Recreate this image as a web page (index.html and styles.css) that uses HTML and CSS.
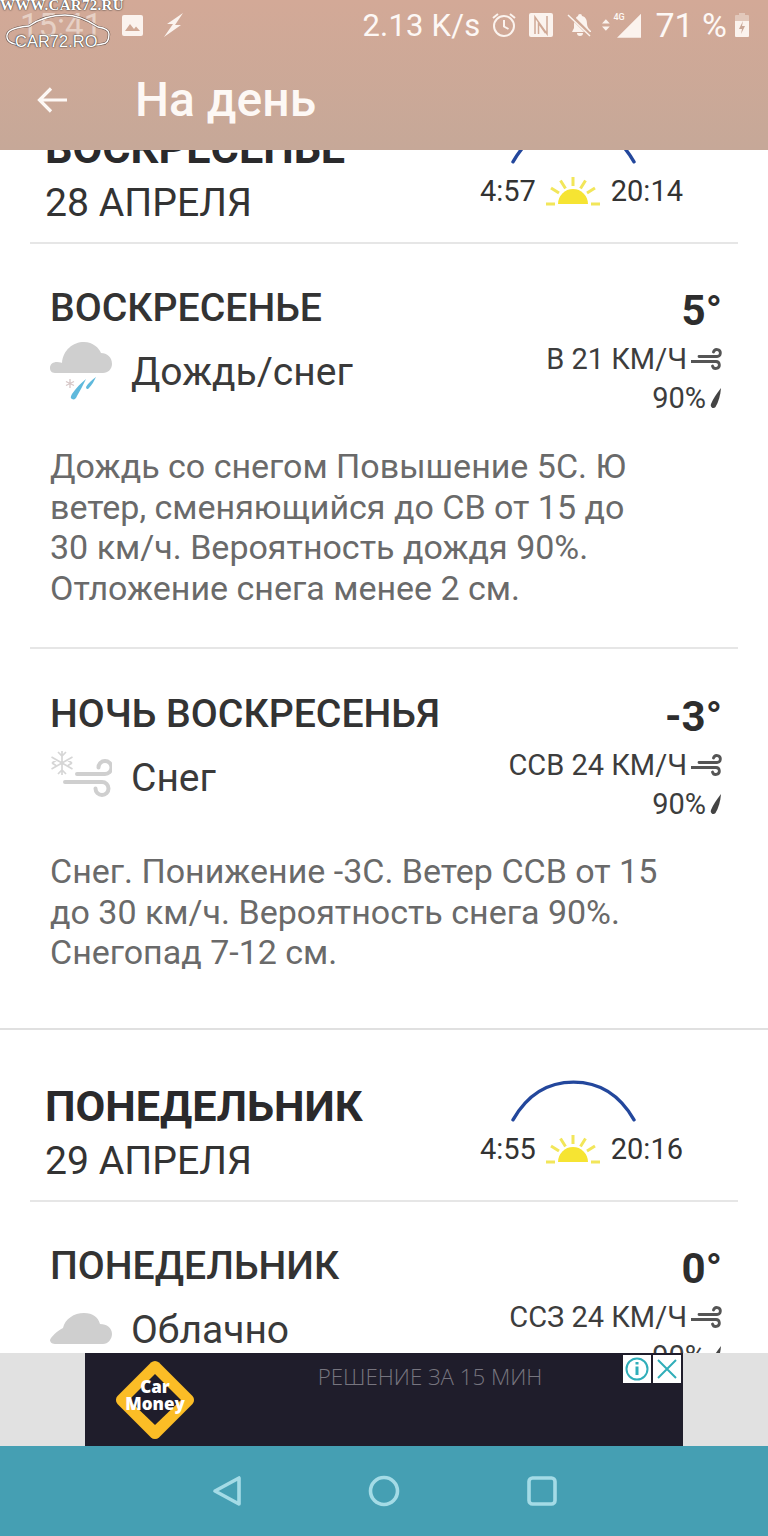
FILE: index.html
```html
<!DOCTYPE html>
<html lang="ru">
<head>
<meta charset="utf-8">
<title>На день</title>
<link rel="stylesheet" href="styles.css">
</head>
<body>
<svg class="defs" width="0" height="0" aria-hidden="true">
  <symbol id="wind" viewBox="0 0 31 23">
    <path d="M8 8.5H26a3.5 3.500 0 1 0-3.500-4.500M0 13.500H25a3.500 3.500 0 1 1-3.500 4.500" fill="none" stroke="currentColor" stroke-width="2.800" stroke-linecap="round"/>
  </symbol>
  <symbol id="drop" viewBox="0 0 12 22">
    <path d="M11 1C10.500 8 8.500 15 5.500 20 3.500 22.500 0 20.500 1 17 3 12 7 6 11 1Z" fill="currentColor"/>
  </symbol>
  <symbol id="sun" viewBox="0 0 54 30">
    <path d="M12 28a15 15 0 0 1 30 0Z" fill="#f6e432"/>
    <path d="M27 1v9M14.500 4.500l5 8M39.500 4.500l-5 8M5 12l8 5M49 12l-8 5M0 28h9M45 28h9" stroke="#f2e65a" stroke-width="3" fill="none"/>
  </symbol>
  <symbol id="arc" viewBox="0 0 126 42">
    <path d="M2 40C18 12 40 2 63 2s45 10 61 38" fill="none" stroke="#23479c" stroke-width="3.400" stroke-linecap="round"/>
  </symbol>
</svg>

<div class="phone">
  <header class="appbar">
    <div class="status">
      <div class="status-left">
        <span class="clock">15:41</span>
        <svg class="st-pic" viewBox="0 0 21 21"><path fill="#fbf3ee" d="M2 0h17a2 2 0 0 1 2 2v17a2 2 0 0 1-2 2H2a2 2 0 0 1-2-2V2a2 2 0 0 1 2-2Z"/><path fill="#d0a996" d="M3 16l5-7 4 5 2-2.500 4 4.500Z"/></svg>
        <svg class="st-bolt" viewBox="0 0 20 24"><path fill="#fbf3ee" d="M19 0 3 11h6L0 24 17 12h-6Z"/></svg>
      </div>
      <div class="status-right">
        <span class="speed">2.13 K/s</span>
        <svg class="st-alarm" viewBox="0 0 24 26"><g fill="none" stroke="#fbf3ee" stroke-width="2"><circle cx="12" cy="14" r="10"/><path d="M12 8v6.500l4.500 2.500M1 6l5-4M23 6l-5-4"/></g></svg>
        <svg class="st-nfc" viewBox="0 0 24 24"><rect width="24" height="24" rx="2" fill="#fbf3ee"/><path d="M6 21V4l12 17V3M9.500 21V10l7 10" fill="none" stroke="#d0a996" stroke-width="1.500"/></svg>
        <svg class="st-bell" viewBox="0 0 26 24"><path fill="#fbf3ee" d="M13 1a2 2 0 0 1 2 2c4 1 5 4 5 8 0 3 2 5 4 7v1H5L7 15v-4c0-4 2-7 4-8a2 2 0 0 1 2-2ZM10 20h6a3 3 0 0 1-6 0Z"/><path d="M2 1l22 22" stroke="#d0a996" stroke-width="4"/><path d="M1 2l22 21" stroke="#fbf3ee" stroke-width="1.500"/></svg>
        <span class="st-signal">
          <svg class="st-updown" viewBox="0 0 8 12"><path fill="#fbf3ee" d="M4 0l4 4.500H0ZM4 12 0 7.500h8Z"/></svg>
          <svg class="st-bars" viewBox="0 0 25 25"><path fill="#fbf3ee" d="M25 0v25H0Z"/></svg>
          <span class="st-4g">4G</span>
        </span>
        <span class="battery-pct">71 %</span>
        <svg class="st-batt" viewBox="0 0 14 24"><path fill="#e2c8bb" d="M4 0h6v2h3a1 1 0 0 1 1 1v5H0V3a1 1 0 0 1 1-1h3Z"/><path fill="#fbf3ee" d="M0 8h14v15a1 1 0 0 1-1 1H1a1 1 0 0 1-1-1Z"/><path fill="#c9a797" d="M8 8 4 16h3l-1 5 4-8H7Z"/></svg>
      </div>
    </div>
    <div class="toolbar">
      <svg class="back" viewBox="0 0 32 28"><path d="M30 14H3M14 2.500 2.500 14 14 25.500" fill="none" stroke="#fdf8f5" stroke-width="3.200"/></svg>
      <h1 class="page-title">На день</h1>
    </div>
    <div class="watermark">
      <span class="wm-url">WWW.CAR72.RU</span>
      <svg class="wm-car" viewBox="0 0 106 36"><path d="M16 32C6 31 1 28 2 22c1-5 10-8 22-9C34 6 48 2 60 2c12 0 24 6 33 12 7 1 11 3 11 7 0 6-2 10-7 10-3 1-5 1-8 1" fill="none" stroke="#6b5750" stroke-width="2.600"/><path d="M16 32C6 31 1 28 2 22c1-5 10-8 22-9C34 6 48 2 60 2c12 0 24 6 33 12 7 1 11 3 11 7 0 6-2 10-7 10-3 1-5 1-8 1" fill="none" stroke="#fff" stroke-width="1.400"/></svg>
      <span class="wm-name">CAR72.RO</span>
    </div>
  </header>

  <main class="scroller">
    <section class="day day-first">
      <div class="day-head">
        <div class="day-names">
          <div class="day-name">ВОСКРЕСЕНЬЕ</div>
          <div class="day-date">28 АПРЕЛЯ</div>
        </div>
        <div class="sun-block">
          <svg class="sun-arc"><use href="#arc"/></svg>
          <div class="sun-times"><span>4:57</span><svg class="sun-icon"><use href="#sun"/></svg><span>20:14</span></div>
        </div>
      </div>

      <article class="period period-first">
        <div class="period-top">
          <div class="period-left">
            <h2 class="period-name">ВОСКРЕСЕНЬЕ</h2>
            <div class="cond">
              <svg class="cond-icon" viewBox="0 0 62 62">
                <path fill="#cfcfcf" d="M5 34C1 34 0 31 0 29c0-4 3-6 7-6 3 0 5 1 5 1 1-13 11-21 22-21 9 0 15 6 17 11 6 0 11 4 11 11 0 5-4 9-9 9Z"/>
                <path fill="#5fb9dc" d="M36 40C33 46 30 52 27 57c-1 3-3 4-5 3-2-1-1-3 0-5 4-6 9-11 14-15Z"/>
                <path fill="#5fb9dc" d="M46 38c-2 4-4 8-7 11-1 2-3 1-3-1 2-4 6-7 10-10Z"/>
                <path d="M20 40v9M16 42.500l8 4M24 42.500l-8 4" stroke="#d6c6c6" stroke-width="1.300" fill="none"/>
              </svg>
              <span class="cond-text">Дождь/снег</span>
            </div>
          </div>
          <div class="period-right">
            <div class="temp">5°</div>
            <div class="meta meta-wind"><span>В 21 КМ/Ч</span><svg class="wind-icon"><use href="#wind"/></svg></div>
            <div class="meta meta-rain"><span>90%</span><svg class="drop-icon"><use href="#drop"/></svg></div>
          </div>
        </div>
        <p class="desc">Дождь со снегом Повышение 5С. Ю ветер, сменяющийся до СВ от 15 до 30 км/ч. Вероятность дождя 90%. Отложение снега менее 2 см.</p>
      </article>

      <article class="period period-night">
        <div class="period-top">
          <div class="period-left">
            <h2 class="period-name">НОЧЬ ВОСКРЕСЕНЬЯ</h2>
            <div class="cond">
              <svg class="cond-icon" viewBox="0 0 62 62">
                <path d="M12 6v24M1.500 12l21 12M22.500 12l-21 12M8 7l4 4 4-4M8 29l4-4 4 4M2 18l4-2.500M2 18l4 2.500M22 18l-4-2.500M22 18l-4 2.500" stroke="#d6d6d6" stroke-width="1.700" fill="none"/>
                <path d="M27 29H55a6.500 6.500 0 1 0-6.500-6.500M15 37H52a6.500 6.500 0 1 1-6.500 6.500" fill="none" stroke="#cfcfcf" stroke-width="4" stroke-linecap="round"/>
              </svg>
              <span class="cond-text">Снег</span>
            </div>
          </div>
          <div class="period-right">
            <div class="temp">-3°</div>
            <div class="meta meta-wind"><span>ССВ 24 КМ/Ч</span><svg class="wind-icon"><use href="#wind"/></svg></div>
            <div class="meta meta-rain"><span>90%</span><svg class="drop-icon"><use href="#drop"/></svg></div>
          </div>
        </div>
        <p class="desc">Снег. Понижение -3С. Ветер ССВ от 15 до 30 км/ч. Вероятность снега 90%. Снегопад 7-12 см.</p>
      </article>
    </section>

    <section class="day">
      <div class="day-head">
        <div class="day-names">
          <div class="day-name">ПОНЕДЕЛЬНИК</div>
          <div class="day-date">29 АПРЕЛЯ</div>
        </div>
        <div class="sun-block">
          <svg class="sun-arc"><use href="#arc"/></svg>
          <div class="sun-times"><span>4:55</span><svg class="sun-icon"><use href="#sun"/></svg><span>20:16</span></div>
        </div>
      </div>

      <article class="period period-first">
        <div class="period-top">
          <div class="period-left">
            <h2 class="period-name">ПОНЕДЕЛЬНИК</h2>
            <div class="cond">
              <svg class="cond-icon" viewBox="0 0 62 62">
                <path fill="#cfcfcf" d="M5 47C1 47 0 44 0 43c1-3 7-9 13-12C15 22 24 16 34 16c9 0 14 4 16 11 7 0 12 4 12 10 0 5-4 10-9 10Z"/>
              </svg>
              <span class="cond-text">Облачно</span>
            </div>
          </div>
          <div class="period-right">
            <div class="temp">0°</div>
            <div class="meta meta-wind"><span>ССЗ 24 КМ/Ч</span><svg class="wind-icon"><use href="#wind"/></svg></div>
            <div class="meta meta-rain"><span>90%</span><svg class="drop-icon"><use href="#drop"/></svg></div>
          </div>
        </div>
      </article>
    </section>
  </main>

  <aside class="ad">
    <div class="ad-inner">
      <svg class="ad-logo" viewBox="0 0 80 80">
        <path fill="#fbbd26" d="M36 2.500a6 6 0 0 1 8 0L77.500 36a6 6 0 0 1 0 8L44 77.500a6 6 0 0 1-8 0L2.500 44a6 6 0 0 1 0-8Z"/>
        <path fill="#1f1d2b" d="M40 14 66 40 40 65 14 40Z"/>
        <text class="ad-logo-text" x="40" y="33" text-anchor="middle">Car</text>
        <text class="ad-logo-text" x="40" y="50" text-anchor="middle">Money</text>
      </svg>
      <span class="ad-text">РЕШЕНИЕ ЗА 15 МИН</span>
      <div class="ad-badges">
        <span class="ad-badge"><svg viewBox="0 0 28 28"><circle cx="14" cy="14" r="10.500" fill="none" stroke="#30aeb9" stroke-width="2"/><path d="M14 11.500v8.500M14 7v2.500" stroke="#30aeb9" stroke-width="3" fill="none"/></svg></span>
        <span class="ad-badge"><svg viewBox="0 0 28 28"><path d="M5 5l18 18M23 5 5 23" stroke="#30aeb9" stroke-width="2" fill="none"/></svg></span>
      </div>
    </div>
  </aside>

  <nav class="navbar">
    <svg class="nav-back" viewBox="0 0 30 32"><path d="M27 3v26L3 16Z" fill="none" stroke="#a4dbe6" stroke-width="3.600" stroke-linejoin="round"/></svg>
    <svg class="nav-home" viewBox="0 0 32 32"><circle cx="16" cy="16" r="13.500" fill="none" stroke="#a4dbe6" stroke-width="3.600"/></svg>
    <svg class="nav-recent" viewBox="0 0 32 32"><rect x="3" y="3" width="26" height="26" rx="3.500" fill="none" stroke="#a4dbe6" stroke-width="3.600"/></svg>
  </nav>
</div>
</body>
</html>
```
FILE: styles.css
```css
* { box-sizing: border-box; }
html, body { margin: 0; padding: 0; background: #fff; }
body { font-family: Roboto, "Noto Sans", sans-serif; color: #2c2c2e; }
.defs { display: block; height: 0; }

.phone {
  width: 768px;
  height: 1536px;
  display: flex;
  flex-direction: column;
  overflow: hidden;
  position: relative;
}

/* App bar */
.appbar {
  height: 150px;
  flex: none;
  position: relative;
  background: linear-gradient(#d3a997, #c6a898);
  color: #fdf8f5;
  z-index: 2;
}
.status {
  height: 50px;
  display: flex;
  justify-content: space-between;
  align-items: center;
  padding: 0 19px 0 20px;
}
.status-left, .status-right { display: flex; align-items: center; }
.clock { font-size: 33px; width: 102px; color: #e6d0c5; }
.st-pic { width: 21px; height: 21px; margin-right: 21px; }
.st-bolt { width: 20px; height: 24px; }
.speed { font-size: 31px; letter-spacing: .2px; margin-right: 12px; }
.st-alarm { width: 24px; height: 26px; margin-right: 13px; }
.st-nfc { width: 24px; height: 24px; margin-right: 14px; }
.st-bell { width: 26px; height: 24px; margin-right: 9px; }
.st-signal { position: relative; display: flex; align-items: center; width: 39px; height: 26px; margin-right: 14px; }
.st-updown { width: 8px; height: 12px; margin-right: 7px; }
.st-bars { width: 25px; height: 25px; }
.st-4g { position: absolute; left: 11px; top: 0; font-size: 9px; font-weight: 500; }
.battery-pct { font-size: 34px; margin-right: 8px; }
.st-batt { width: 14px; height: 24px; }

.toolbar {
  height: 100px;
  display: flex;
  align-items: center;
  padding-left: 37px;
}
.back { width: 32px; height: 28px; margin-right: 66px; }
.page-title { margin: 0 0 2px; font-size: 48px; font-weight: 500; color: #fdf8f5; }

.watermark {
  position: absolute;
  left: 0;
  top: 0;
  width: 122px;
  height: 50px;
}
.wm-url {
  position: absolute;
  left: 0;
  top: -3px;
  font: bold 15px "Liberation Serif", serif;
  letter-spacing: .3px;
  color: #fff;
  text-shadow: 0 0 2px #333, 0 0 1px #333;
  white-space: nowrap;
}
.wm-car { position: absolute; left: 5px; top: 13px; width: 106px; height: 36px; }
.wm-name {
  position: absolute;
  left: 15px;
  top: 32px;
  font: 16.500px "Liberation Sans", sans-serif;
  color: #fff;
  text-shadow: 0 0 2px #333, 0 0 1px #333;
  white-space: nowrap;
}

/* Scrolling forecast */
.scroller { flex: 1; min-height: 0; overflow: hidden; background: #fff; }
.day { border-bottom: 2px solid #e0e0e0; }
.day-first { margin-top: -78px; }

.day-head {
  display: flex;
  justify-content: space-between;
  align-items: flex-end;
  height: 172px;
  margin: 0 30px;
  padding: 0 55px 17px 15px;
  border-bottom: 2px solid #e6e6e6;
}
.day-name { font-size: 43.200px; font-weight: 700; line-height: 50px; color: #2a2a2c; }
.day-date { font-size: 39.200px; line-height: 44px; margin-top: 7px; color: #333; }

.sun-block { width: 203px; display: flex; flex-direction: column; align-items: center; margin-bottom: 17px; }
.sun-arc { width: 125px; height: 42px; margin: 0 16px 10px 0; }
.sun-times {
  width: 100%;
  display: flex;
  justify-content: space-between;
  align-items: flex-end;
  font-size: 29px;
  line-height: 34px;
  color: #333;
}
.sun-icon { width: 54px; height: 30px; margin-bottom: 2px; }

.period {
  margin: 0 30px;
  padding: 41px 16px 0 20px;
}
.period-first { height: 405px; border-bottom: 2px solid #e6e6e6; }
.period-night { height: 379px; padding-top: 42px; }
.period-night .desc { margin-top: 27px; }
.period-top { display: flex; justify-content: space-between; align-items: flex-start; }
.period-name { margin: 0; font-size: 39.200px; font-weight: 500; line-height: 46px; color: #333; }
.cond { display: flex; margin-top: 8px; }
.cond-icon { width: 62px; height: 62px; margin-right: 19px; }
.cond-text { font-size: 39px; line-height: 48px; margin-top: 9px; color: #3a3a3a; }

.period-right { display: flex; flex-direction: column; align-items: flex-end; }
.temp { font-size: 42px; font-weight: 700; line-height: 50px; color: #2d2d2d; margin-top: 1px; }
.meta { display: flex; align-items: center; font-size: 29px; line-height: 40px; color: #3d3d3d; }
.meta-wind { margin-top: 3px; }
.meta-rain { margin-top: -1px; }
.wind-icon { width: 31px; height: 23px; margin-left: 4px; color: #555; }
.drop-icon { width: 12px; height: 22px; margin-left: 4px; color: #444; }

.desc {
  margin: 28px 0 0;
  width: 612px;
  font-size: 34px;
  line-height: 40.500px;
  color: #6a6a6a;
}

/* Ad */
.ad {
  height: 93px;
  flex: none;
  background: #e1e1e1;
  display: flex;
  justify-content: center;
}
.ad-inner {
  width: 598px;
  background: #1f1d2b;
  position: relative;
  display: flex;
  justify-content: center;
  padding-left: 92px;
}
.ad-logo { position: absolute; left: 30px; top: 7px; width: 80px; height: 80px; }
.ad-logo-text { font: 800 17px "Open Sans", sans-serif; fill: #fff; }
.ad-text {
  margin-top: 9px;
  font: 300 22.300px/30px "Open Sans", sans-serif;
  color: #77757f;
}
.ad-badges { position: absolute; right: 2px; top: 2px; display: flex; gap: 2px; }
.ad-badge { width: 28px; height: 28px; background: #fff; display: block; }
.ad-badge svg { display: block; width: 28px; height: 28px; }

/* Navigation bar */
.navbar {
  height: 90px;
  flex: none;
  background: #459fb3;
  display: flex;
  align-items: center;
  justify-content: center;
  gap: 126px;
  padding: 0 0 1px 2px;
}
.nav-back { width: 30px; height: 32px; }
.nav-home, .nav-recent { width: 32px; height: 32px; }
```
